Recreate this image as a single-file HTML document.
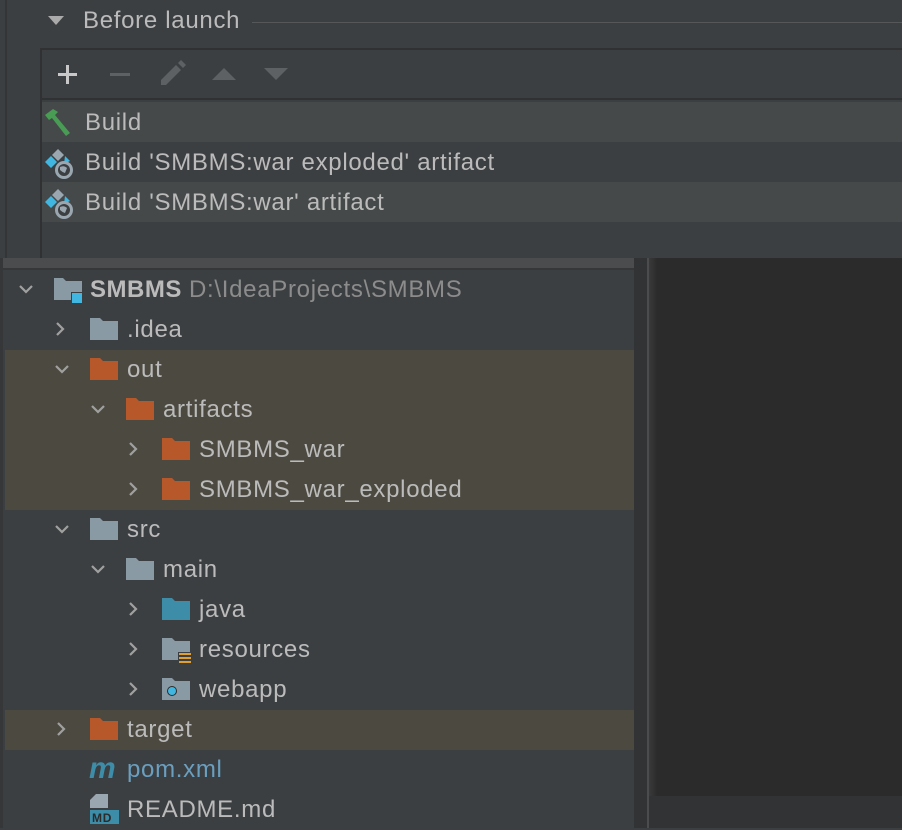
<!DOCTYPE html>
<html><head><meta charset="utf-8">
<style>
*{margin:0;padding:0;box-sizing:border-box}
body{width:902px;height:828px;overflow:hidden;background:#3c3f41;position:relative;font-family:"Liberation Sans","DejaVu Sans",sans-serif;color:#bbbbbb;font-size:24px;letter-spacing:0.7px}
.abs{position:absolute}
</style></head><body>
<div class="abs" style="left:5px;top:0;width:2px;height:260px;background:#333537"></div>
<svg class="abs" style="left:46px;top:14px" width="20" height="14"><polygon points="2,2 18,2 10,11" fill="#aaaaaa"/></svg>
<div class="abs" style="left:83px;top:8px;line-height:26px;color:#bbbbbb">Before launch</div>
<div class="abs" style="left:252px;top:22px;width:650px;height:1px;background:#555759"></div>
<div class="abs" style="left:40px;top:48px;width:862px;height:212px;border-left:2px solid #2f3133;border-top:2px solid #2f3133;background:#3c3f41"></div>
<div class="abs" style="left:42px;top:98px;width:860px;height:2px;background:#2f3133"></div>
<svg class="abs" style="left:56px;top:63px" width="24" height="24"><rect x="2" y="10" width="19" height="3" fill="#c8c8c8"/><rect x="10" y="2" width="3" height="19" fill="#c8c8c8"/></svg>
<svg class="abs" style="left:108px;top:63px" width="24" height="24"><rect x="2" y="10" width="20" height="3" fill="#5e6163"/></svg>
<svg class="abs" style="left:158px;top:59px" width="30" height="30"><path d="M3 26 L3 21 L18 6 L23 11 L8 26 Z" fill="#5e6163"/><path d="M20 4 L23 1 L28 6 L25 9 Z" fill="#5e6163"/></svg>
<svg class="abs" style="left:210px;top:66px" width="28" height="16"><polygon points="2,14 26,14 14,2" fill="#5e6163"/></svg>
<svg class="abs" style="left:262px;top:66px" width="28" height="16"><polygon points="2,2 26,2 14,14" fill="#5e6163"/></svg>
<div class="abs" style="left:42px;top:102px;width:860px;height:40px;background:#45494a"></div>
<div class="abs" style="left:42px;top:182px;width:860px;height:40px;background:#45494a"></div>
<svg class="abs" style="left:44px;top:107px" width="32" height="30"><path d="M1 8 L9 2 L14 5 L11 8 L26 26 L22 29 L8 11 L5 13 Z" fill="#499c54"/></svg>
<div class="abs" style="left:85px;top:110px;line-height:26px">Build</div>
<svg class="abs" style="left:44px;top:148px" width="34" height="32"><path d="M14 1 L20 7 L14 13 L8 7 Z" fill="#9aa7b0"/><path d="M7 8 L13 14 L7 20 L1 14 Z" fill="#40b6e0"/><path d="M21 8 L26 13 L20 16 Z" fill="#40b6e0"/><circle cx="20" cy="22" r="9" fill="#9aa7b0"/><circle cx="20" cy="22" r="6" fill="#3c3f41"/><path d="M16 19 Q20 17 23 20 L21 25 Q18 24 16 22Z" fill="#9aa7b0"/></svg>
<div class="abs" style="left:85px;top:150px;line-height:26px">Build 'SMBMS:war exploded' artifact</div>
<svg class="abs" style="left:44px;top:188px" width="34" height="32"><path d="M14 1 L20 7 L14 13 L8 7 Z" fill="#9aa7b0"/><path d="M7 8 L13 14 L7 20 L1 14 Z" fill="#40b6e0"/><path d="M21 8 L26 13 L20 16 Z" fill="#40b6e0"/><circle cx="20" cy="22" r="9" fill="#9aa7b0"/><circle cx="20" cy="22" r="6" fill="#3c3f41"/><path d="M16 19 Q20 17 23 20 L21 25 Q18 24 16 22Z" fill="#9aa7b0"/></svg>
<div class="abs" style="left:85px;top:190px;line-height:26px">Build 'SMBMS:war' artifact</div>

<div class="abs" style="left:0;top:258px;width:902px;height:570px;background:#3c3f41"></div>
<div class="abs" style="left:3px;top:258px;width:644px;height:10px;background:#4a4c4e"></div>
<div class="abs" style="left:3px;top:268px;width:631px;height:2px;background:#353739"></div>
<div class="abs" style="left:0;top:258px;width:3px;height:570px;background:#353739"></div>
<div class="abs" style="left:634px;top:258px;width:13px;height:570px;background:#313335"></div>
<div class="abs" style="left:647px;top:258px;width:255px;height:538px;background:#2b2b2b"></div>
<div class="abs" style="left:649px;top:258px;width:8px;height:570px;background:linear-gradient(90deg,#3a3a3a,rgba(43,43,43,0))"></div>
<div class="abs" style="left:647px;top:796px;width:255px;height:32px;background:#313335"></div>
<div class="abs" style="left:647px;top:258px;width:2px;height:570px;background:#4a4c4e"></div>
<div class="abs" style="left:5px;top:350px;width:629px;height:160px;background:#4c4a40"></div>
<div class="abs" style="left:5px;top:710px;width:629px;height:40px;background:#4c4a40"></div>

<svg width="0" height="0" style="position:absolute">
<defs>
<path id="down" d="M1 1 L7 7 L13 1" stroke="#a0a0a0" stroke-width="2.2" fill="none"/>
<path id="right" d="M1 1 L7 7 L1 13" stroke="#a0a0a0" stroke-width="2.2" fill="none"/>
</defs></svg>

<div class="abs" style="left:0;top:270px;width:634px;height:560px">
 <svg class="abs" style="left:19px;top:15px" width="16" height="10"><use href="#down"/></svg>
 <svg class="abs" style="left:54px;top:8px" width="30" height="28"><path d="M0 0 H9 L12 3 H28 V22 H0Z" fill="#8a9aa4"/><rect x="17" y="14" width="12" height="12" fill="#3c3f41"/><rect x="18" y="15" width="10" height="10" fill="#40b6e0"/></svg>
 <div class="abs" style="left:90px;top:7px;line-height:26px;font-weight:bold;color:#bbbbbb;letter-spacing:0.5px">SMBMS <span style="font-weight:normal;color:#8c8c8c;letter-spacing:0.7px">D:\IdeaProjects\SMBMS</span></div>
 <svg class="abs" style="left:56px;top:52px" width="10" height="16"><use href="#right"/></svg>
 <svg class="abs" style="left:90px;top:48px" width="28" height="24"><path d="M0 0 H10 L13 3 H28 V22 H0Z" fill="#8a9aa4"/></svg>
 <div class="abs" style="left:127px;top:47px;line-height:26px">.idea</div>
 <svg class="abs" style="left:55px;top:95px" width="16" height="10"><use href="#down"/></svg>
 <svg class="abs" style="left:90px;top:88px" width="28" height="24"><path d="M0 0 H10 L13 3 H28 V22 H0Z" fill="#b6582a"/></svg>
 <div class="abs" style="left:127px;top:87px;line-height:26px">out</div>
 <svg class="abs" style="left:91px;top:135px" width="16" height="10"><use href="#down"/></svg>
 <svg class="abs" style="left:126px;top:128px" width="28" height="24"><path d="M0 0 H10 L13 3 H28 V22 H0Z" fill="#b6582a"/></svg>
 <div class="abs" style="left:163px;top:127px;line-height:26px">artifacts</div>
 <svg class="abs" style="left:129px;top:172px" width="10" height="16"><use href="#right"/></svg>
 <svg class="abs" style="left:162px;top:168px" width="28" height="24"><path d="M0 0 H10 L13 3 H28 V22 H0Z" fill="#b6582a"/></svg>
 <div class="abs" style="left:199px;top:167px;line-height:26px">SMBMS_war</div>
 <svg class="abs" style="left:129px;top:212px" width="10" height="16"><use href="#right"/></svg>
 <svg class="abs" style="left:162px;top:208px" width="28" height="24"><path d="M0 0 H10 L13 3 H28 V22 H0Z" fill="#b6582a"/></svg>
 <div class="abs" style="left:199px;top:207px;line-height:26px">SMBMS_war_exploded</div>
 <svg class="abs" style="left:55px;top:255px" width="16" height="10"><use href="#down"/></svg>
 <svg class="abs" style="left:90px;top:248px" width="28" height="24"><path d="M0 0 H10 L13 3 H28 V22 H0Z" fill="#8a9aa4"/></svg>
 <div class="abs" style="left:127px;top:247px;line-height:26px">src</div>
 <svg class="abs" style="left:91px;top:295px" width="16" height="10"><use href="#down"/></svg>
 <svg class="abs" style="left:126px;top:288px" width="28" height="24"><path d="M0 0 H10 L13 3 H28 V22 H0Z" fill="#8a9aa4"/></svg>
 <div class="abs" style="left:163px;top:287px;line-height:26px">main</div>
 <svg class="abs" style="left:129px;top:332px" width="10" height="16"><use href="#right"/></svg>
 <svg class="abs" style="left:162px;top:328px" width="28" height="24"><path d="M0 0 H10 L13 3 H28 V22 H0Z" fill="#3d8ca8"/></svg>
 <div class="abs" style="left:199px;top:327px;line-height:26px">java</div>
 <svg class="abs" style="left:129px;top:372px" width="10" height="16"><use href="#right"/></svg>
 <svg class="abs" style="left:162px;top:368px" width="30" height="28"><path d="M0 0 H10 L13 3 H28 V22 H0Z" fill="#8a9aa4"/><rect x="16" y="14" width="14" height="14" fill="#3c3f41"/><rect x="17" y="15" width="12" height="2" fill="#e0a030"/><rect x="17" y="19" width="12" height="2" fill="#e0a030"/><rect x="17" y="23" width="12" height="2" fill="#e0a030"/></svg>
 <div class="abs" style="left:199px;top:367px;line-height:26px">resources</div>
 <svg class="abs" style="left:129px;top:412px" width="10" height="16"><use href="#right"/></svg>
 <svg class="abs" style="left:162px;top:408px" width="28" height="24"><path d="M0 0 H10 L13 3 H28 V22 H0Z" fill="#8a9aa4"/><circle cx="10" cy="13" r="5" fill="#2b2b2b"/><circle cx="10" cy="13" r="4" fill="#40b6e0"/></svg>
 <div class="abs" style="left:199px;top:407px;line-height:26px">webapp</div>
 <svg class="abs" style="left:57px;top:452px" width="10" height="16"><use href="#right"/></svg>
 <svg class="abs" style="left:90px;top:448px" width="28" height="24"><path d="M0 0 H10 L13 3 H28 V22 H0Z" fill="#b6582a"/></svg>
 <div class="abs" style="left:127px;top:447px;line-height:26px">target</div>
 <div class="abs" style="left:89px;top:484px;font-size:30px;font-weight:bold;font-style:italic;color:#3d8ca8;line-height:30px;letter-spacing:0">m</div>
 <div class="abs" style="left:127px;top:487px;line-height:26px;color:#6a9fc0">pom.xml</div>
 <svg class="abs" style="left:90px;top:524px" width="30" height="32"><path d="M6 0 H18 V14 H0 V6 Z" fill="#9aa7b0"/><rect x="0" y="16" width="29" height="14" fill="#3d8ca8"/><text x="2" y="28" font-family="Liberation Sans" font-weight="bold" font-size="12" fill="#2b2b2b">MD</text></svg>
 <div class="abs" style="left:127px;top:527px;line-height:26px">README.md</div>
</div>
</body></html>
